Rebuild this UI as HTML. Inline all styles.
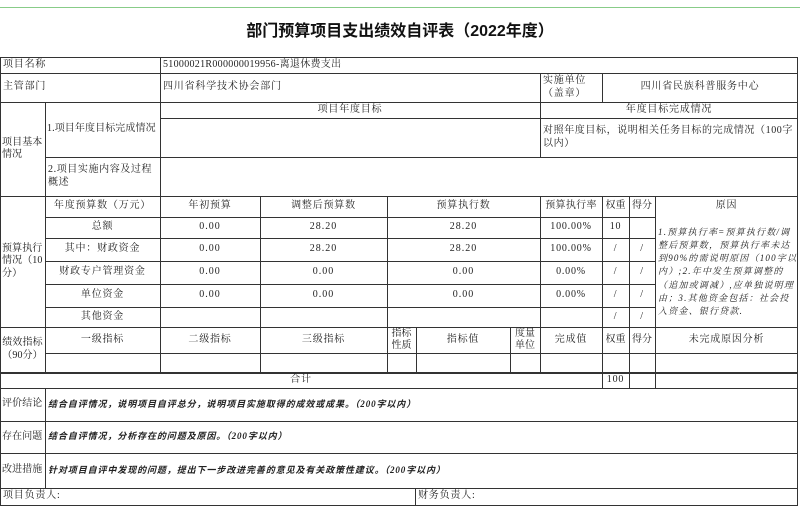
<!DOCTYPE html>
<html><head><meta charset="utf-8"><style>
body{margin:0;width:800px;height:510px;background:#fff;overflow:hidden;position:relative;font-family:"Liberation Serif","Noto Serif CJK SC",serif;font-size:10px;color:#222;letter-spacing:0.8px}
.h{position:absolute;height:1px;background:#333}
.v{position:absolute;width:1px;background:#333}
.c{position:absolute;display:flex;align-items:center;justify-content:center;text-align:center;line-height:1.25;box-sizing:border-box}
.l{justify-content:flex-start;text-align:left;padding-left:3px}
.i{font-style:italic;font-weight:bold;font-family:"Liberation Serif","Noto Sans CJK SC",serif;font-size:9px;letter-spacing:0.9px}
.n{letter-spacing:1px}
.k{letter-spacing:0.1px;padding-left:2px}
</style></head><body>
<div class="h" style="left:0;width:800px;top:7px;background:#8c8"></div>
<div class="c" style="left:0;top:8px;width:800px;height:48px;font-family:'Liberation Sans','Noto Sans CJK SC',sans-serif;font-weight:bold;font-size:16px;color:#111;letter-spacing:0">部门预算项目支出绩效自评表（2022年度）</div>

<div class="h" style="left:0;width:798px;top:57px"></div>
<div class="h" style="left:0;width:798px;top:73px"></div>
<div class="h" style="left:0;width:798px;top:102px"></div>
<div class="h" style="left:160px;width:638px;top:118px"></div>
<div class="h" style="left:45px;width:753px;top:157px"></div>
<div class="h" style="left:0;width:798px;top:196px"></div>
<div class="h" style="left:45px;width:610px;top:217px"></div>
<div class="h" style="left:45px;width:610px;top:238px"></div>
<div class="h" style="left:45px;width:610px;top:261px"></div>
<div class="h" style="left:45px;width:610px;top:284px"></div>
<div class="h" style="left:45px;width:610px;top:307px"></div>
<div class="h" style="left:0;width:798px;top:327px"></div>
<div class="h" style="left:45px;width:753px;top:353px"></div>
<div class="h" style="left:0;width:798px;top:372px;height:2px"></div>
<div class="h" style="left:0;width:798px;top:388px"></div>
<div class="h" style="left:0;width:798px;top:421px"></div>
<div class="h" style="left:0;width:798px;top:453px"></div>
<div class="h" style="left:0;width:798px;top:488px"></div>
<div class="h" style="left:0;width:798px;top:505px"></div>

<div class="v" style="left:0;top:57px;height:449px"></div>
<div class="v" style="left:797px;top:57px;height:449px"></div>
<div class="v" style="left:45px;top:102px;height:270px"></div>
<div class="v" style="left:45px;top:388px;height:100px"></div>
<div class="v" style="left:160px;top:57px;height:315px"></div>
<div class="v" style="left:260px;top:196px;height:176px"></div>
<div class="v" style="left:387px;top:196px;height:176px"></div>
<div class="v" style="left:416px;top:327px;height:45px"></div>
<div class="v" style="left:510px;top:327px;height:45px"></div>
<div class="v" style="left:540px;top:73px;height:84px"></div>
<div class="v" style="left:540px;top:196px;height:176px"></div>
<div class="v" style="left:602px;top:73px;height:29px"></div>
<div class="v" style="left:602px;top:196px;height:192px"></div>
<div class="v" style="left:629px;top:196px;height:192px"></div>
<div class="v" style="left:655px;top:196px;height:192px"></div>
<div class="v" style="left:415px;top:488px;height:17px"></div>

<div class="c l" style="left:0;top:57px;width:160px;height:16px">项目名称</div>
<div class="c l" style="left:160px;top:57px;width:400px;height:16px;letter-spacing:0.3px">51000021R000000019956-离退休费支出</div>
<div class="c l" style="left:0;top:73px;width:160px;height:29px">主管部门</div>
<div class="c l" style="left:160px;top:73px;width:380px;height:29px">四川省科学技术协会部门</div>
<div class="c l" style="left:540px;top:73px;width:62px;height:29px">实施单位<br>（盖章）</div>
<div class="c" style="left:602px;top:73px;width:196px;height:29px">四川省民族科普服务中心</div>

<div class="c l k" style="left:0;top:102px;width:45px;height:94px">项目基本<br>情况</div>
<div class="c l k" style="left:45px;top:102px;width:115px;height:55px;white-space:nowrap">1.项目年度目标完成情况</div>
<div class="c l" style="left:45px;top:157px;width:115px;height:39px;letter-spacing:0.6px">2.项目实施内容及过程概述</div>
<div class="c" style="left:160px;top:102px;width:380px;height:16px">项目年度目标</div>
<div class="c" style="left:540px;top:102px;width:258px;height:16px">年度目标完成情况</div>
<div class="c l" style="left:540px;top:118px;width:258px;height:39px;letter-spacing:0.6px">对照年度目标，说明相关任务目标的完成情况（100字以内）</div>

<div class="c l k" style="left:0;top:196px;width:45px;height:131px">预算执行情况（10分）</div>
<div class="c" style="left:45px;top:196px;width:115px;height:21px">年度预算数（万元）</div>
<div class="c" style="left:160px;top:196px;width:100px;height:21px">年初预算</div>
<div class="c" style="left:260px;top:196px;width:127px;height:21px">调整后预算数</div>
<div class="c" style="left:387px;top:196px;width:153px;height:21px">预算执行数</div>
<div class="c" style="left:540px;top:196px;width:62px;height:21px;letter-spacing:0.3px">预算执行率</div>
<div class="c" style="left:602px;top:196px;width:27px;height:21px;letter-spacing:0">权重</div>
<div class="c" style="left:629px;top:196px;width:26px;height:21px;letter-spacing:0">得分</div>
<div class="c" style="left:655px;top:196px;width:143px;height:21px">原因</div>

<div class="c" style="left:45px;top:217px;width:115px;height:21px">总额</div>
<div class="c n" style="left:160px;top:217px;width:100px;height:21px">0.00</div>
<div class="c n" style="left:260px;top:217px;width:127px;height:21px">28.20</div>
<div class="c n" style="left:387px;top:217px;width:153px;height:21px">28.20</div>
<div class="c" style="left:540px;top:217px;width:62px;height:21px">100.00%</div>
<div class="c" style="left:602px;top:217px;width:27px;height:21px">10</div>

<div class="c" style="left:45px;top:238px;width:115px;height:23px">其中：财政资金</div>
<div class="c n" style="left:160px;top:238px;width:100px;height:23px">0.00</div>
<div class="c n" style="left:260px;top:238px;width:127px;height:23px">28.20</div>
<div class="c n" style="left:387px;top:238px;width:153px;height:23px">28.20</div>
<div class="c" style="left:540px;top:238px;width:62px;height:23px">100.00%</div>
<div class="c" style="left:602px;top:238px;width:27px;height:23px">/</div>
<div class="c" style="left:629px;top:238px;width:26px;height:23px">/</div>

<div class="c" style="left:45px;top:261px;width:115px;height:23px">财政专户管理资金</div>
<div class="c n" style="left:160px;top:261px;width:100px;height:23px">0.00</div>
<div class="c n" style="left:260px;top:261px;width:127px;height:23px">0.00</div>
<div class="c n" style="left:387px;top:261px;width:153px;height:23px">0.00</div>
<div class="c" style="left:540px;top:261px;width:62px;height:23px">0.00%</div>
<div class="c" style="left:602px;top:261px;width:27px;height:23px">/</div>
<div class="c" style="left:629px;top:261px;width:26px;height:23px">/</div>

<div class="c" style="left:45px;top:284px;width:115px;height:23px">单位资金</div>
<div class="c n" style="left:160px;top:284px;width:100px;height:23px">0.00</div>
<div class="c n" style="left:260px;top:284px;width:127px;height:23px">0.00</div>
<div class="c n" style="left:387px;top:284px;width:153px;height:23px">0.00</div>
<div class="c" style="left:540px;top:284px;width:62px;height:23px">0.00%</div>
<div class="c" style="left:602px;top:284px;width:27px;height:23px">/</div>
<div class="c" style="left:629px;top:284px;width:26px;height:23px">/</div>

<div class="c" style="left:45px;top:307px;width:115px;height:20px">其他资金</div>
<div class="c" style="left:602px;top:307px;width:27px;height:20px">/</div>
<div class="c" style="left:629px;top:307px;width:26px;height:20px">/</div>

<div class="c l" style="left:655px;top:217px;width:143px;height:110px;font-style:italic;font-size:9px;line-height:1.45;letter-spacing:1.2px">1.预算执行率=预算执行数/调整后预算数，预算执行率未达到90%的需说明原因（100字以内）;2.年中发生预算调整的（追加或调减）,应单独说明理由；3.其他资金包括：社会投入资金、银行贷款.</div>

<div class="c" style="left:0;top:327px;width:45px;height:45px;letter-spacing:0.1px">绩效指标（90分）</div>
<div class="c" style="left:45px;top:327px;width:115px;height:26px">一级指标</div>
<div class="c" style="left:160px;top:327px;width:100px;height:26px">二级指标</div>
<div class="c" style="left:260px;top:327px;width:127px;height:26px">三级指标</div>
<div class="c" style="left:387px;top:327px;width:29px;height:26px;letter-spacing:0">指标<br>性质</div>
<div class="c" style="left:416px;top:327px;width:94px;height:26px">指标值</div>
<div class="c" style="left:510px;top:327px;width:30px;height:26px;letter-spacing:0">度量<br>单位</div>
<div class="c" style="left:540px;top:327px;width:62px;height:26px">完成值</div>
<div class="c" style="left:602px;top:327px;width:27px;height:26px;letter-spacing:0">权重</div>
<div class="c" style="left:629px;top:327px;width:26px;height:26px;letter-spacing:0">得分</div>
<div class="c" style="left:655px;top:327px;width:143px;height:26px">未完成原因分析</div>

<div class="c" style="left:0;top:373px;width:602px;height:15px">合计</div>
<div class="c" style="left:602px;top:373px;width:27px;height:15px">100</div>

<div class="c l k" style="left:0;top:388px;width:45px;height:33px">评价结论</div>
<div class="c l i" style="left:45px;top:388px;width:753px;height:33px">结合自评情况，说明项目自评总分，说明项目实施取得的成效或成果。（200字以内）</div>
<div class="c l k" style="left:0;top:421px;width:45px;height:32px">存在问题</div>
<div class="c l i" style="left:45px;top:421px;width:753px;height:32px">结合自评情况，分析存在的问题及原因。（200字以内）</div>
<div class="c l k" style="left:0;top:453px;width:45px;height:35px">改进措施</div>
<div class="c l i" style="left:45px;top:453px;width:753px;height:35px">针对项目自评中发现的问题，提出下一步改进完善的意见及有关政策性建议。（200字以内）</div>

<div class="c l" style="left:0;top:488px;width:415px;height:17px">项目负责人:</div>
<div class="c l" style="left:415px;top:488px;width:383px;height:17px">财务负责人:</div>
</body></html>
